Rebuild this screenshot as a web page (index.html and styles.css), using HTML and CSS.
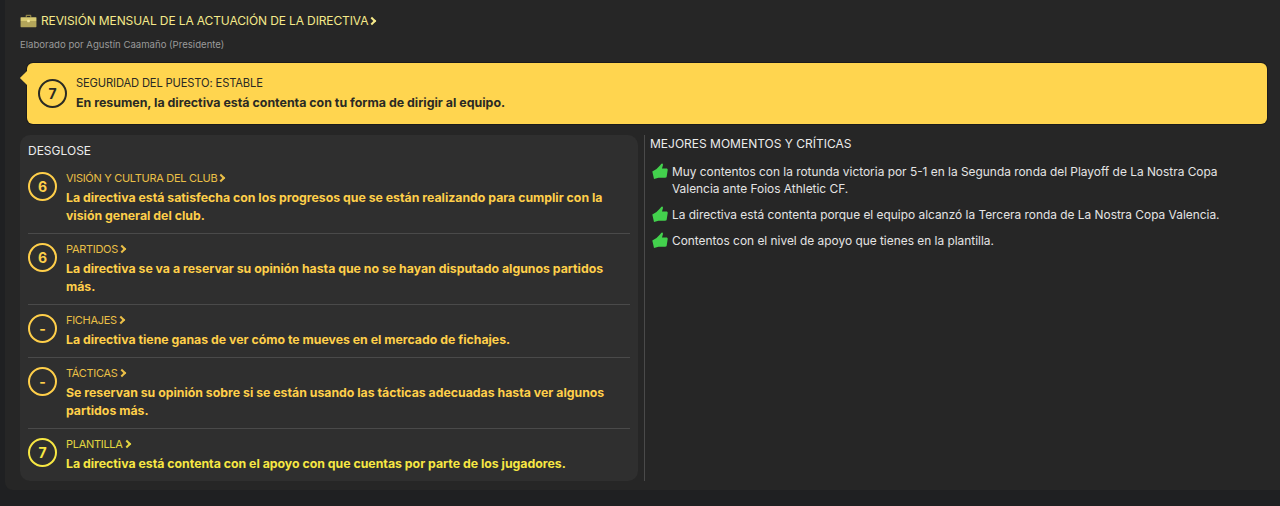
FILE: index.html
```html
<!DOCTYPE html>
<html lang="es">
<head>
<meta charset="utf-8">
<title>Revisión mensual</title>
<link rel="stylesheet" href="styles.css">
</head>
<body>
<main class="panel">
  <header class="head">
    <h1 class="head-title">
      <svg class="case" viewBox="0 0 18 14" aria-hidden="true"><path fill="#8f8347" d="M6 3V1.500C6 .8 6.600.4 7.200.4h3.600c.6 0 1.200.4 1.200 1.100V3h-1.300V1.700H7.300V3z"/><path fill="#d8ca72" d="M.6 3.600c0-.4.3-.7.7-.7h15.400c.4 0 .7.300.7.700V7H.6z"/><path fill="#b3a55a" d="M.6 7h16.800v5.900c0 .4-.3.700-.7.700H1.300c-.4 0-.7-.3-.7-.7z"/><rect x="7.600" y="5.800" width="2.800" height="2.400" rx=".5" fill="#f1e6a0"/></svg>
      <span>REVISIÓN MENSUAL DE LA ACTUACIÓN DE LA DIRECTIVA</span><i class="chev"></i>
    </h1>
    <p class="head-sub">Elaborado por Agustín Caamaño (Presidente)</p>
  </header>

  <section class="banner">
    <div class="score score-dark">7</div>
    <div>
      <div class="banner-title">SEGURIDAD DEL PUESTO: ESTABLE</div>
      <div class="banner-text">En resumen, la directiva está contenta con tu forma de dirigir al equipo.</div>
    </div>
  </section>

  <div class="columns">
    <section class="breakdown">
      <h2 class="section-title">DESGLOSE</h2>
      <article class="row amber">
        <div class="score">6</div>
        <div>
          <div class="row-title">VISIÓN Y CULTURA DEL CLUB<i class="chev"></i></div>
          <p class="row-text">La directiva está satisfecha con los progresos que se están realizando para cumplir con la visión general del club.</p>
        </div>
      </article>
      <article class="row amber">
        <div class="score">6</div>
        <div>
          <div class="row-title">PARTIDOS<i class="chev"></i></div>
          <p class="row-text">La directiva se va a reservar su opinión hasta que no se hayan disputado algunos partidos más.</p>
        </div>
      </article>
      <article class="row amber">
        <div class="score">-</div>
        <div>
          <div class="row-title">FICHAJES<i class="chev"></i></div>
          <p class="row-text">La directiva tiene ganas de ver cómo te mueves en el mercado de fichajes.</p>
        </div>
      </article>
      <article class="row amber">
        <div class="score">-</div>
        <div>
          <div class="row-title">TÁCTICAS<i class="chev"></i></div>
          <p class="row-text">Se reservan su opinión sobre si se están usando las tácticas adecuadas hasta ver algunos partidos más.</p>
        </div>
      </article>
      <article class="row lime">
        <div class="score">7</div>
        <div>
          <div class="row-title">PLANTILLA<i class="chev"></i></div>
          <p class="row-text">La directiva está contenta con el apoyo con que cuentas por parte de los jugadores.</p>
        </div>
      </article>
    </section>

    <section class="moments">
      <h2 class="section-title">MEJORES MOMENTOS Y CRÍTICAS</h2>
      <ul class="moment-list">
        <li class="moment">
          <svg class="thumb" viewBox="0 0 16 16" aria-hidden="true"><path fill="#43d14d" d="M.3 8.500 4.500 6 8.200 2.300C8.800 1.400 9.500.3 10.300.5c.9.300.8 1.600.4 2.600L10 5.500h4.300c1 0 1.600.7 1.400 1.600l-1 6.400c-.1.800-.7 1.200-1.400 1.200H6.500L2 16z"/></svg>
          <span>Muy contentos con la rotunda victoria por 5-1 en la Segunda ronda del Playoff de La Nostra Copa Valencia ante Foios Athletic CF.</span>
        </li>
        <li class="moment">
          <svg class="thumb" viewBox="0 0 16 16" aria-hidden="true"><path fill="#43d14d" d="M.3 8.500 4.500 6 8.200 2.300C8.800 1.400 9.500.3 10.300.5c.9.300.8 1.600.4 2.600L10 5.500h4.300c1 0 1.600.7 1.400 1.600l-1 6.400c-.1.800-.7 1.200-1.400 1.200H6.500L2 16z"/></svg>
          <span>La directiva está contenta porque el equipo alcanzó la Tercera ronda de La Nostra Copa Valencia.</span>
        </li>
        <li class="moment">
          <svg class="thumb" viewBox="0 0 16 16" aria-hidden="true"><path fill="#43d14d" d="M.3 8.500 4.500 6 8.200 2.300C8.800 1.400 9.500.3 10.300.5c.9.300.8 1.600.4 2.600L10 5.500h4.300c1 0 1.600.7 1.400 1.600l-1 6.400c-.1.800-.7 1.200-1.400 1.200H6.500L2 16z"/></svg>
          <span>Contentos con el nivel de apoyo que tienes en la plantilla.</span>
        </li>
      </ul>
    </section>
  </div>
</main>
</body>
</html>
```
FILE: styles.css
```css
* { box-sizing: border-box; }
html, body { margin: 0; height: 100%; }
body {
  background: #1f2022;
  font-family: Inter, "Noto Sans", sans-serif;
  color: #e8e8e8;
  padding-left: 5px;
  overflow: hidden;
}
.panel {
  height: 490px;
  background: #262626;
  border-bottom-left-radius: 8px;
  padding: 12px 0 9px 15px;
  display: flex;
  flex-direction: column;
}
.head { height: 51px; }
.head-title {
  margin: 0;
  height: 18px;
  display: flex;
  align-items: center;
  font-size: 12px;
  letter-spacing: -.12px;
  font-weight: 400;
  color: #f5e98a;
  line-height: 18px;
}
.case { width: 17px; height: 14px; margin-right: 4px; flex: none; }
.head-sub {
  margin: 8px 0 0;
  font-size: 9.6px;
  line-height: 14px;
  color: #9a9a9a;
}
.chev {
  display: inline-block;
  width: 6px;
  height: 6px;
  margin-left: 1px;
  border-top: 2px solid currentColor;
  border-right: 2px solid currentColor;
  transform: rotate(45deg);
  vertical-align: 1px;
}
.banner {
  position: relative;
  margin-left: 7px;
  margin-right: 13px;
  height: 61px;
  flex: none;
  background: #ffd54f;
  border-radius: 6px;
  box-shadow: 0 0 0 1px #1b1b1b;
  color: #2a2a24;
  display: flex;
  align-items: center;
  padding-left: 11px;
  gap: 9px;
}
.banner::before {
  content: "";
  position: absolute;
  left: -5px;
  top: 10px;
  width: 10px;
  height: 10px;
  background: #ffd54f;
  transform: rotate(45deg);
}
.banner-title { font-size: 11.2px; letter-spacing: -.15px; line-height: 17px; margin-bottom: 2px; }
.banner-text { font-size: 12.4px; line-height: 18px; font-weight: 700; }
.score {
  flex: none;
  width: 29px;
  height: 29px;
  border: 2.5px solid currentColor;
  border-radius: 50%;
  display: flex;
  align-items: center;
  justify-content: center;
  font-size: 14px;
  font-weight: 700;
}
.columns {
  flex: 1;
  display: flex;
  margin-top: 11px;
  min-height: 0;
}
.breakdown {
  width: 618px;
  flex: none;
  background: #2f2f2f;
  border-radius: 10px;
  padding: 7px 8px 0;
}
.section-title {
  margin: 0;
  font-size: 12px;
  line-height: 18px;
  font-weight: 400;
  color: #ececec;
}
.row {
  display: flex;
  gap: 9px;
  padding: 7px 0 8px;
  border-top: 1px solid #4a4a4a;
}
.row:first-of-type { border-top: 0; padding-top: 10px; }
.amber { color: #ffcf4a; }
.lime { color: #f7e743; }
.row .score { margin-top: 2px; }
.row-title { font-size: 11px; letter-spacing: -.3px; line-height: 16px; margin-bottom: 3px; opacity: .9; }
.row-text { margin: 0; font-size: 12.3px; line-height: 18px; font-weight: 700; }
.moments {
  flex: 1;
  margin-left: 6px;
  border-left: 1px solid #4a4a4a;
  padding-left: 5px;
}
.moment-list { list-style: none; margin: 10px 0 0; padding: 0; }
.moment {
  display: flex;
  gap: 4px;
  font-size: 11.9px;
  line-height: 17px;
  color: #e4e4e4;
  margin-bottom: 9px;
  padding-right: 40px;
}
.thumb { width: 16px; height: 16px; flex: none; margin: 0 0 0 2px; }
```
